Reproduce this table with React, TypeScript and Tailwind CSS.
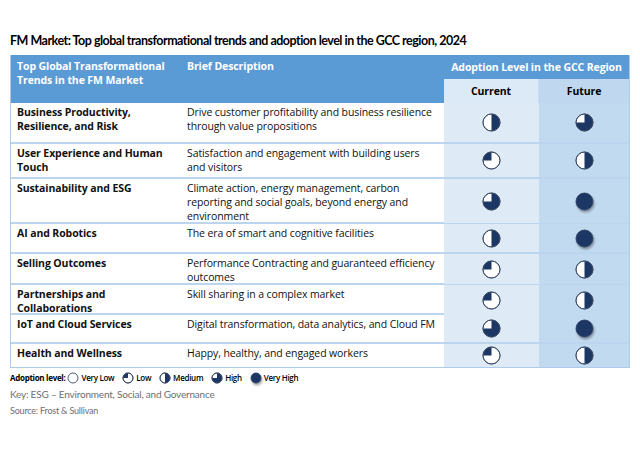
import React from "react"

type Level = 0 | 1 | 2 | 3 | 4

function HarveyBall({ level, size = 19 }: { level: Level; size?: number }) {
  const c = size / 2
  const r = size / 2 - 1
  const navy = "#1c3764"
  let fill: React.ReactNode = null
  if (level === 1) {
    fill = <path d={`M${c},${c} L${c},${c - r} A${r},${r} 0 0 0 ${c - r},${c} Z`} fill={navy} />
  } else if (level === 2) {
    fill = <path d={`M${c},${c - r} A${r},${r} 0 0 1 ${c},${c + r} Z`} fill={navy} />
  } else if (level === 3) {
    fill = <path d={`M${c},${c} L${c - r},${c} A${r},${r} 0 1 0 ${c},${c - r} Z`} fill={navy} />
  } else if (level === 4) {
    fill = <circle cx={c} cy={c} r={r} fill={navy} />
  }
  return (
    <svg
      width={size}
      height={size}
      viewBox={`0 0 ${size} ${size}`}
      className={level === 4 ? "drop-shadow-[1px_2px_1px_rgba(0,0,0,0.35)]" : ""}
    >
      <circle cx={c} cy={c} r={r} fill="#ffffff" stroke="#3b4a63" strokeWidth={0.9} />
      {fill}
      {level > 0 && level < 4 && <circle cx={c} cy={c} r={r} fill="none" stroke="#3b4a63" strokeWidth={0.9} />}
    </svg>
  )
}

const rows: { trend: string; desc: string; current: Level; future: Level; h: string }[] = [
  { trend: "Business Productivity, Resilience, and Risk", desc: "Drive customer profitability and business resilience through value propositions", current: 2, future: 3, h: "h-[39px]" },
  { trend: "User Experience and Human Touch", desc: "Satisfaction and engagement with building users and visitors", current: 1, future: 2, h: "h-[35px]" },
  { trend: "Sustainability and ESG", desc: "Climate action, energy management, carbon reporting and social goals, beyond energy and environment", current: 3, future: 4, h: "h-[45px]" },
  { trend: "AI and Robotics", desc: "The era of smart and cognitive facilities", current: 2, future: 4, h: "h-[30px]" },
  { trend: "Selling Outcomes", desc: "Performance Contracting and guaranteed efficiency outcomes", current: 1, future: 2, h: "h-[31px]" },
  { trend: "Partnerships and Collaborations", desc: "Skill sharing in a complex market", current: 1, future: 2, h: "h-[30px]" },
  { trend: "IoT and Cloud Services", desc: "Digital transformation, data analytics, and Cloud FM", current: 3, future: 4, h: "h-[29px]" },
  { trend: "Health and Wellness", desc: "Happy, healthy, and engaged workers", current: 1, future: 2, h: "h-[25px]" },
]

const legend: { level: Level; label: string }[] = [
  { level: 0, label: "Very Low" },
  { level: 1, label: "Low" },
  { level: 2, label: "Medium" },
  { level: 3, label: "High" },
  { level: 4, label: "Very High" },
]

export default function App() {
  return (
    <div className="w-[640px] h-[450px] bg-white px-[10px] pt-[33px] font-['Lato',sans-serif] text-[#111]">
      <h1 className="text-[12.5px] font-bold leading-[16px] tracking-[-0.5px] text-black h-[22px]">
        FM Market: Top global transformational trends and adoption level in the GCC region, 2024
      </h1>

      <div className="w-[620px] border-l border-r border-b border-[#aecbe9] font-['Open_Sans',sans-serif] text-[10.5px] leading-[14px] tracking-[-0.1px]">
        {/* header */}
        <div className="grid grid-cols-[170px_263px_95px_1fr] grid-rows-[24px_24px] bg-[#5b9bd5] text-white font-bold">
          <div className="row-span-2 pl-[6px] pr-[8px] pt-[4px]">Top Global Transformational Trends in the FM Market</div>
          <div className="row-span-2 pl-[6px] pt-[4px]">Brief Description</div>
          <div className="col-span-2 flex items-center justify-center">Adoption Level in the GCC Region</div>
          <div className="bg-[#dce9f6] text-black flex items-center justify-center border-r border-[#c8dcf0]">Current</div>
          <div className="bg-[#c0d8ef] text-black flex items-center justify-center">Future</div>
        </div>

        {/* body */}
        {rows.map((row, i) => (
          <div
            key={i}
            className={`grid grid-cols-[170px_263px_95px_1fr] ${row.h} ${i > 0 ? "border-t-2 border-[#bcd5ee]" : ""}`}
          >
            <div className="pl-[6px] pr-[8px] pt-[2px] font-bold">{row.trend}</div>
            <div className="pl-[6px] pr-[6px] pt-[2px]">{row.desc}</div>
            <div className="bg-[#deeaf6] flex items-center justify-center">
              <HarveyBall level={row.current} />
            </div>
            <div className="bg-[#c2daf0] flex items-center justify-center">
              <HarveyBall level={row.future} />
            </div>
          </div>
        ))}
      </div>

      <div className="flex items-center mt-[3px] h-[14px] text-[8px] font-bold text-black font-['Open_Sans',sans-serif] tracking-[-0.3px]">
        <span className="mr-[2px]">Adoption level:</span>
        {legend.map((l) => (
          <span key={l.label} className="flex items-center mr-[8px]">
            <HarveyBall level={l.level} size={12} />
            <span className="ml-[2px] font-semibold">{l.label}</span>
          </span>
        ))}
      </div>
      <div className="mt-[2px] text-[10px] leading-[14px] text-[#6d6e71] tracking-[-0.2px]">
        Key: ESG – Environment, Social, and Governance
      </div>
      <div className="mt-[4px] text-[9px] leading-[12px] text-[#6d6e71] tracking-[-0.2px]">Source: Frost &amp; Sullivan</div>
    </div>
  )
}
